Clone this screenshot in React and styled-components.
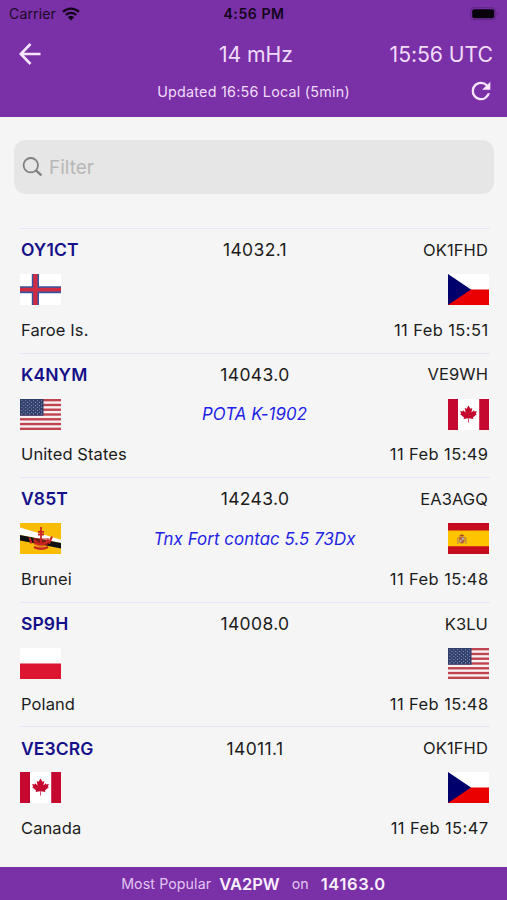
import styled, {createGlobalStyle} from "styled-components";

const GlobalStyle = createGlobalStyle`
  * {
    box-sizing: border-box;
  }

  body {
    margin: 0;
    background: #f5f5f5;
    font-family: Inter, "Liberation Sans", sans-serif;
  }
`

const Screen = styled.div`
  width: 507px;
  height: 900px;
  display: flex;
  flex-direction: column;
  background: #f5f5f5;
  overflow: hidden;
`

const Header = styled.header`
  height: 117px;
  flex: none;
  background: #7a30a7;
  color: #f0dcfa;
`

const Bar = styled.div`
  display: grid;
  grid-template-columns: 1fr auto 1fr;
  grid-template-rows: 100%;
  align-items: center;
  height: ${({height}) => height}px;
  padding: ${({pad}) => pad};
  white-space: nowrap;
`

const Side = styled.div`
  display: flex;
  align-items: center;
  justify-content: ${({end}) => (end ? 'flex-end' : 'flex-start')};
`

const Carrier = styled.span`
  color: #1b0a26;
  font-size: 14px;
  letter-spacing: 0.15px;
  margin-right: 6px;
`

const Clock = styled.span`
  color: #12051b;
  font-size: 14px;
  font-weight: 600;
  letter-spacing: 0.6px;
`

const Title = styled.span`
  font-size: 21.2px;
  letter-spacing: -0.05px;
`

const Updated = styled.span`
  font-size: 14.3px;
  letter-spacing: 0.25px;
`

const Search = styled.div`
  height: 54px;
  flex: none;
  margin: 23px 13px 34px 14px;
  padding: 1px 0 0 8px;
  border-radius: 12px;
  background: #e6e6e6;
  display: flex;
  align-items: center;
  gap: 6px;
  color: #b7b7b7;
  font-size: 19px;
`

const List = styled.div`
  flex: 1;
  padding: 0 17px 0 20px;
`

const Row = styled.div`
  height: 124.6px;
  padding: 0 1px 0 0;
  border-top: 1px solid #e6e6fa;
  display: grid;
  grid-template-columns: 1fr auto 1fr;
  grid-template-rows: 41.5px 38px 42.5px;
  align-items: center;
  white-space: nowrap;
`

const Cell = styled.div`
  color: #1c1c1c;
  font-size: 16.5px;
  letter-spacing: 0.1px;
  padding-left: ${({end}) => (end ? 0 : 1)}px;
  padding-right: ${({end}) => (end ? 1 : 0)}px;
  text-align: ${({end}) => (end ? 'right' : 'left')};
`

const Call = styled(Cell)`
  color: #15118a;
  font-size: 17.5px;
  font-weight: 600;
`

const Freq = styled(Cell)`
  font-size: 17.5px;
  letter-spacing: 0.35px;
  text-align: center;
`

const Time = styled(Cell)`
  letter-spacing: 0.4px;
  padding-right: 0.5px;
`

const Note = styled(Cell)`
  color: #2222e6;
  font-size: 16.8px;
  font-style: italic;
  padding: 0;
  text-align: center;
`

const FlagCell = styled.div`
  display: flex;
  justify-content: ${({end}) => (end ? 'flex-end' : 'flex-start')};
`

const FlagSvg = styled.svg`
  display: block;
  width: 41px;
  height: 31px;
`

const Footer = styled.footer`
  height: 33px;
  flex: none;
  background: #7a30a7;
  color: #e3c6f2;
  display: flex;
  align-items: center;
  justify-content: center;
  font-size: 14.2px;
  letter-spacing: 0.1px;
`

const Strong = styled.strong`
  color: #faf0ff;
  font-size: 16.5px;
  font-weight: 600;
  letter-spacing: ${({spacing}) => spacing || 0}px;
  margin: ${({gap}) => gap};
`

const WifiIcon = () => (
    <svg width="18" height="14" viewBox="0 0 18 14" fill="none" stroke="#12051b" strokeWidth="2.3">
        <path d="M1 4.8a11.6 11.6 0 0 1 16 0"/>
        <path d="M3.8 8a7.5 7.5 0 0 1 10.4 0"/>
        <path d="M9 13.5L5.9 10.2a4.5 4.5 0 0 1 6.2 0z" fill="#12051b" stroke="none"/>
    </svg>
)

const BatteryIcon = () => (
    <svg width="29" height="14" viewBox="0 0 29 14">
        <rect x="0.7" y="0.7" width="25" height="12" rx="3.4" fill="none" stroke="#5f2685"/>
        <rect x="2.2" y="2.2" width="22" height="9" rx="2" fill="#08020d"/>
        <path d="M27 4.8q2.4 1.9 0 3.8z" fill="#5f2685"/>
    </svg>
)

const BackIcon = () => (
    <svg width="22" height="22" viewBox="0 0 22 22" fill="none" stroke="#f7e6ff" strokeWidth="2.6">
        <path d="M21.5 11H2M11.5 1L1.8 11l9.7 10"/>
    </svg>
)

const RefreshIcon = () => (
    <svg width="28" height="28" viewBox="0 0 24 24" fill="#f7e6ff">
        <path d="M17.65 6.35A7.96 7.96 0 0 0 12 4a8 8 0 1 0 7.73 10h-2.08A6 6 0 1 1 12 6c1.66 0 3.14.69 4.22 1.78L13 11h7V4z"/>
    </svg>
)

const SearchIcon = () => (
    <svg width="21" height="21" viewBox="0 0 21 21" fill="none" stroke="#808080" strokeWidth="1.8">
        <circle cx="8.8" cy="8.2" r="7.2"/>
        <path d="M14 13.3l5.4 5" strokeWidth="2.4"/>
    </svg>
)

const stars = []
for (let r = 0; r < 9; r++) {
    for (let c = 0; c < (r % 2 ? 5 : 6); c++) {
        stars.push([1.9 + c * 3.9 + (r % 2 ? 1.95 : 0), 1.7 + r * 1.65])
    }
}

const flags = {
    fo: (
        <>
            <path fill="#fff" d="M0 0h41v31H0z"/>
            <path fill="#34559f" d="M0 12.3h41v7H0zM11.8 0h7.2v31h-7.2z"/>
            <path fill="#cf2b43" d="M0 13.8h41v3.8H0zM13.2 0h4.3v31h-4.3z"/>
        </>
    ),
    cz: (
        <>
            <path fill="#fff" d="M0 0h41v15.5H0z"/>
            <path fill="#ea0000" d="M0 15.5h41V31H0z"/>
            <path fill="#00006c" d="M0 0l23 15.5L0 31z"/>
        </>
    ),
    us: (
        <>
            <path fill="#f7f1f2" d="M0 0h41v31H0z"/>
            {[0, 1, 2, 3, 4, 5, 6].map(i => (
                <rect key={i} y={i * 4.77} width="41" height="2.38" fill="#c04450"/>
            ))}
            <path fill="#303e6c" d="M0 0h23.5v16.7H0z"/>
            {stars.map(([x, y], i) => <circle key={i} cx={x} cy={y} r="0.55" fill="#a3abc4"/>)}
        </>
    ),
    ca: (
        <>
            <path fill="#fff" d="M0 0h41v31H0z"/>
            <path fill="#c4082f" d="M0 0h10v31H0zM31.2 0H41v31h-9.8z"/>
            <path
                fill="#c4082f"
                d="M20.5 6.4l-1.9 3.3-1.9-.8.9 4.5-2.5-2.2-.5 1.3-2.4-.4.9 2.6-.9.6 3.9 3.2-.5 1.5 4.6-.7-.1 4.3h.8l-.1-4.3 4.6.7-.5-1.5 3.9-3.2-.9-.6.9-2.6-2.4.4-.5-1.3-2.5 2.200.9-4.500-1.900.8z"
            />
        </>
    ),
    bn: (
        <>
            <path fill="#f9bd08" d="M0 0h41v31H0z"/>
            <path fill="#fff" d="M0 4.5L41 16.8V20L0 12z"/>
            <path fill="#111" d="M0 12l41 8v5.5L0 17.5z"/>
            <path d="M13 15h16.5l-1 6.5-7.2 3.500-7.500-3.500z" fill="#c9251f" opacity="0.55"/>
            <g fill="none" stroke="#c9251f">
                <path d="M14.500 16.500c1 6 12 6 14 0" strokeWidth="2.400"/>
                <path d="M21 4v18M18 8.800h6M18 11.500h6" strokeWidth="1.800"/>
                <path d="M9.500 14.500l2 6M32 13.500l-3 7" strokeWidth="2"/>
                <path d="M14 24q7 3.500 14 0" strokeWidth="2.500"/>
            </g>
            <path d="M15.500 22.800q5.500 2.600 11 0" fill="none" stroke="#e8a51c" strokeWidth="0.6"/>
        </>
    ),
    es: (
        <>
            <path fill="#c60b1e" d="M0 0h41v31H0z"/>
            <path fill="#ffc400" d="M0 7.6h41v15.6H0z"/>
            <path fill="#c08a3a" d="M9.2 14h1.300v7H9.200zM17.200 14h1.300v7h-1.300z"/>
            <path fill="#b5603f" d="M11.200 13.500h5.300v5.500q-2.600 3.500-5.300 0z"/>
            <path fill="#b9a9a0" d="M13.800 14.500h2.300v2.600h-2.300zM11.700 17.100h2.100v2h-2.100z"/>
            <path fill="#a85020" d="M11.200 12.900q2.600-3.400 5.300 0z"/>
        </>
    ),
    pl: (
        <>
            <path fill="#fff" d="M0 0h41v15.5H0z"/>
            <path fill="#dc1530" d="M0 15.5h41V31H0z"/>
        </>
    ),
}

const Flag = ({code}) => (
    <FlagSvg viewBox="0 0 41 31">{flags[code]}</FlagSvg>
)

const spots = [
    {call: 'OY1CT', freq: '14032.1', spotter: 'OK1FHD', from: 'fo', to: 'cz', note: '', country: 'Faroe Is.', time: '11 Feb 15:51'},
    {call: 'K4NYM', freq: '14043.0', spotter: 'VE9WH', from: 'us', to: 'ca', note: 'POTA K-1902', country: 'United States', time: '11 Feb 15:49'},
    {call: 'V85T', freq: '14243.0', spotter: 'EA3AGQ', from: 'bn', to: 'es', note: 'Tnx Fort contac 5.5 73Dx', country: 'Brunei', time: '11 Feb 15:48'},
    {call: 'SP9H', freq: '14008.0', spotter: 'K3LU', from: 'pl', to: 'us', note: '', country: 'Poland', time: '11 Feb 15:48'},
    {call: 'VE3CRG', freq: '14011.1', spotter: 'OK1FHD', from: 'ca', to: 'cz', note: '', country: 'Canada', time: '11 Feb 15:47'},
]

const Spot = ({call, freq, spotter, from, to, note, country, time}) => {
    return (
        <Row>
            <Call>{call}</Call>
            <Freq>{freq}</Freq>
            <Cell end>{spotter}</Cell>
            <FlagCell><Flag code={from}/></FlagCell>
            <Note>{note}</Note>
            <FlagCell end><Flag code={to}/></FlagCell>
            <Cell>{country}</Cell>
            <span/>
            <Time end>{time}</Time>
        </Row>
    )
}

const App = () => {
    return (
        <Screen>
            <GlobalStyle/>
            <Header>
                <Bar height={27} pad="0 8px 0 9px">
                    <Side><Carrier>Carrier</Carrier><WifiIcon/></Side>
                    <Clock>4:56 PM</Clock>
                    <Side end><BatteryIcon/></Side>
                </Bar>
                <Bar height={53} pad="0 14px 0 19px">
                    <Side><BackIcon/></Side>
                    <Title>14 mHz</Title>
                    <Side end><Title>15:56 UTC</Title></Side>
                </Bar>
                <Bar height={22} pad="0 12px">
                    <span/>
                    <Updated>Updated 16:56 Local (5min)</Updated>
                    <Side end><RefreshIcon/></Side>
                </Bar>
            </Header>
            <Search>
                <SearchIcon/>
                <span>Filter</span>
            </Search>
            <List>
                {spots.map((spot, i) => <Spot key={i} {...spot}/>)}
            </List>
            <Footer>
                Most Popular
                <Strong gap="0 12px 0 8px">VA2PW</Strong>
                on
                <Strong gap="0 0 0 12px" spacing={0.6}>14163.0</Strong>
            </Footer>
        </Screen>
    )
}

export default App
